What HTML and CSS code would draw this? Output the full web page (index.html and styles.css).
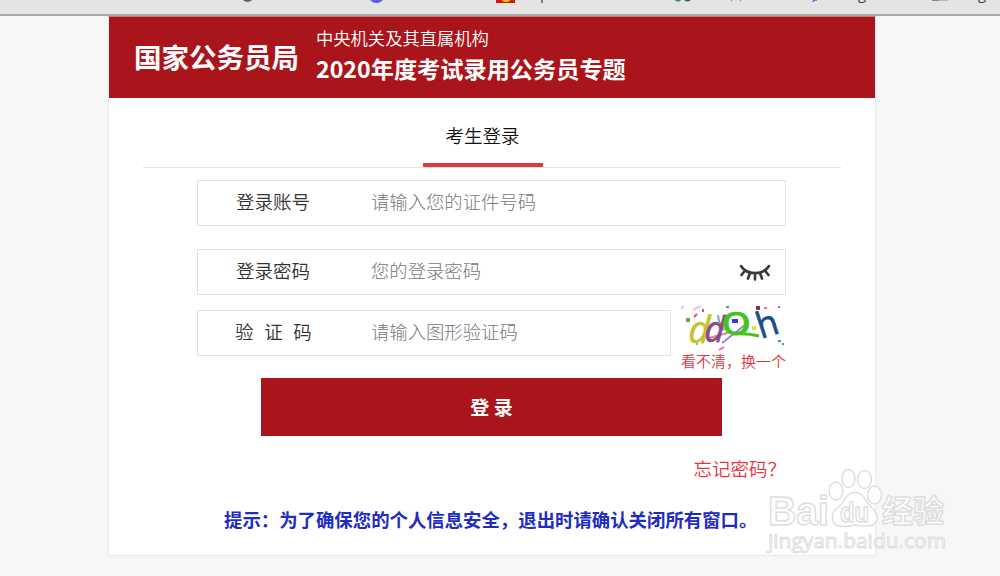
FILE: index.html
```html
<!DOCTYPE html>
<html lang="zh-CN">
<head>
    <meta charset="UTF-8">
    <title>考生登录</title>
    <link rel="stylesheet" href="styles.css">
</head>
<body>
    <div class="browser-bar">
        <svg width="1000" height="14" viewBox="0 0 1000 14">
            <circle cx="247.500" cy="-4" r="6" fill="#5f6368"/>
            <circle cx="376.500" cy="-5" r="8" fill="#5b5be6"/>
            <rect x="496" y="-13" width="19" height="16" fill="#d9150f"/>
            <circle cx="506" cy="-4" r="6" fill="#f8cf00"/>
            <circle cx="678" cy="-2" r="3.500" fill="#1a9c4b"/>
            <circle cx="687.500" cy="-2" r="3.500" fill="#0b7f35"/>
            <rect x="731" y="0" width="1" height="1" fill="#777"/>
            <rect x="740" y="0" width="1" height="1" fill="#777"/>
            <path d="M813 2 L814 0 L817 0" stroke="#5566cc" fill="none" stroke-width="1.500"/>
            <rect x="932" y="-3" width="7" height="4" fill="#888"/>
            <rect x="939" y="-3" width="9" height="4" fill="#c0b0d0"/>
            <text x="540" y="-1">p</text>
            <text x="858" y="-1">g</text>
            <text x="978" y="-1">g</text>
        </svg>
    </div>

    <div class="container">
        <div class="header">
            <h1>国家公务员局</h1>
            <div class="header-title">
                <p>中央机关及其直属机构</p>
                <h2>2020年度考试录用公务员专题</h2>
            </div>
        </div>

        <div class="tabs">
            <div class="tab">考生登录</div>
        </div>

        <form class="login-form">
            <div class="field">
                <label for="account">登录账号</label>
                <input type="text" id="account" placeholder="请输入您的证件号码">
            </div>
            <div class="field password">
                <label for="password">登录密码</label>
                <input type="password" id="password" placeholder="您的登录密码">
                <svg class="eye" width="32" height="20" viewBox="0 0 32 20">
                    <path d="M2 3 C8 12.500 24 12.500 30 3 M6 7.500 L2.500 12 M11 10 L9 15.500 M16 10.500 V16.500 M21 10 L23 15.500 M26 7.500 L29.500 12"/>
                </svg>
            </div>
            <div class="code-row">
                <div class="field">
                    <label for="code" class="code-label">验 证 码</label>
                    <input type="text" id="code" placeholder="请输入图形验证码">
                </div>
                <div class="captcha">
                    <svg width="104" height="46" viewBox="0 0 104 46">
                        <g class="noise">
                            <path d="M0 4 L3 1 M12 5 L20 1" stroke="#d5c9f5"/>
                            <path class="thick" d="M5 15 H9" stroke="#58b04a"/>
                            <path d="M41 38 L64 20" stroke="#8a86f0"/>
                            <path d="M28 33 L50 27" stroke="#d88a8a"/>
                            <path class="thick" d="M51 16 H57" stroke="#3838d8"/>
                            <path class="thick" d="M71 23 H75" stroke="#d6e24a"/>
                            <path d="M37 10 Q38 20 43 25" stroke="#7aa8c8"/>
                            <path d="M16 9 L13 12 M22 4 V7 M23 24 H26" stroke="#e04a80"/>
                            <path class="thick" d="M75 3 H79" stroke="#98342a"/>
                            <path d="M45 2 H48 M97 36 H100" stroke="#38b068"/>
                            <path d="M83 3 H86 M92 19 H95 M38 45 L43 42" stroke="#ec66b0"/>
                            <path d="M97 2 H99 M102 38 V40" stroke="#7878e0"/>
                            <path d="M15 39 H17 M27 34 H30" stroke="#66c8c0"/>
                        </g>
                        <text transform="translate(7 37) rotate(4) scale(0.950 1)" fill="#c4c42a" stroke="#c4c42a" font-size="38">d</text>
                        <text transform="translate(23 36) rotate(4) scale(0.950 1)" fill="#8a4a8c" stroke="#8a4a8c" font-size="36">d</text>
                        <text class="upright" transform="translate(40 29.500) scale(1.200 1)" fill="#45c41e" stroke="#45c41e" font-size="42">o</text>
                        <path class="swash" d="M52 29 Q66 28 78 31"/>
                        <text class="upright" transform="translate(80 34) rotate(-18) scale(0.950 1)" fill="#154e8a" stroke="#154e8a" font-size="36">h</text>
                    </svg>
                    <a class="change">看不清，换一个</a>
                </div>
            </div>
            <button type="button">登 录</button>
            <a class="forget">忘记密码？</a>
        </form>

        <p class="tips">提示：为了确保您的个人信息安全，退出时请确认关闭所有窗口。</p>
    </div>

    <svg class="watermark" width="184" height="90" viewBox="0 0 184 90">
        <text x="2" y="59" class="brand" font-size="41" textLength="61" lengthAdjust="spacingAndGlyphs">Bai</text>
        <ellipse cx="70" cy="25" rx="7" ry="9"/>
        <ellipse cx="82.500" cy="12.500" rx="6.500" ry="9"/>
        <ellipse cx="98.500" cy="13.500" rx="7" ry="9"/>
        <ellipse cx="108.500" cy="29" rx="7" ry="9"/>
        <path d="M80 31 Q88 22 97 30 Q101 37 108 44 Q115 53 107 59 Q101 61 89 59 Q76 62 70 59 Q63 52 69 44 Q77 38 80 31 Z"/>
        <text x="74" y="56" class="brand" font-size="27" textLength="29" lengthAdjust="spacingAndGlyphs">du</text>
        <text x="116" y="56" class="brand cn" font-size="31">经验</text>
        <text x="2" y="82" class="site" font-size="20" textLength="178" lengthAdjust="spacingAndGlyphs">jingyan.baidu.com</text>
    </svg>
</body>
</html>
```

FILE: styles.css
```css
* {
    box-sizing: border-box;
}
body {
    font-family: "Noto Sans CJK SC", sans-serif;
    background-color: #f7f7f7;
    margin: 0;
    height: 576px;
    overflow: hidden;
    color: #333;
}
h1, h2, p {
    margin: 0;
}
.browser-bar {
    height: 16px;
    background-color: #e4e4e4;
    border-bottom: 2px solid #a9a9a9;
    overflow: hidden;
}
.browser-bar svg {
    display: block;
}
.browser-bar text {
    font-family: "Open Sans", sans-serif;
    font-size: 15px;
    fill: #444;
}
.container {
    width: 768px;
    height: 540px;
    margin-left: 108px;
    background-color: #fff;
    border: 1px solid #ebebeb;
    border-top-color: #c9797c;
}
.header {
    display: flex;
    height: 81px;
    padding-left: 25px;
    background-color: #aa151b;
    color: #fff;
}
.header h1 {
    width: 182px;
    font-size: 27.500px;
    line-height: 79px;
    white-space: nowrap;
}
.header-title {
    padding-top: 6px;
}
.header-title p {
    font-size: 17.300px;
    font-weight: 350;
    line-height: 30px;
}
.header-title h2 {
    font-size: 23.200px;
    line-height: 30px;
}
.tabs {
    display: flex;
    justify-content: center;
    height: 70px;
    margin: 0 34px;
    padding-right: 19px;
    border-bottom: 1px solid #e2e2e2;
}
.tab {
    width: 120px;
    border-bottom: 4px solid #e2373b;
    color: #111;
    font-size: 18.500px;
    font-weight: 350;
    line-height: 75px;
    text-align: center;
}
.login-form {
    display: flex;
    flex-direction: column;
    width: 589px;
    margin: 12px 0 0 88px;
}
.field {
    display: flex;
    align-items: center;
    height: 46px;
    padding: 0 0 4px 38px;
    border: 1px solid #e2e2e2;
}
.field label {
    width: 135px;
    font-size: 18.500px;
    font-weight: 350;
    line-height: 40px;
    white-space: pre;
}
.field .code-label {
    word-spacing: 6.500px;
    margin-left: -1px;
    width: 136px;
}
.field input {
    flex: 1;
    min-width: 0;
    padding: 0;
    border: none;
    outline: none;
    font-family: "Noto Sans CJK SC", sans-serif;
    font-size: 18.350px;
    font-weight: 300;
}
.field input::placeholder {
    color: #777;
}
.password {
    margin: 23px 0 10px;
}
.eye {
    margin: 6px 14px 0 0;
    fill: none;
    stroke: #383838;
    stroke-width: 2.600;
    stroke-linecap: round;
}
.code-row {
    display: flex;
    height: 73px;
}
.code-row .field {
    width: 474px;
    margin-top: 5px;
}
.captcha {
    margin-left: 10px;
}
.captcha svg {
    display: block;
}
.captcha text {
    font-family: "Open Sans", sans-serif;
    font-style: italic;
    stroke-width: 0.700;
}
.captcha .upright {
    font-style: normal;
}
.noise path {
    fill: none;
    stroke-width: 2;
}
.noise .thick {
    stroke-width: 4;
}
.swash {
    fill: none;
    stroke: #45c41e;
    stroke-width: 3;
}
.change {
    display: block;
    color: #e5353b;
    font-size: 15px;
    font-weight: 350;
    line-height: 20px;
    white-space: nowrap;
}
button {
    width: 461px;
    height: 58px;
    margin-left: 64px;
    padding: 0 0 2px;
    border: none;
    background-color: #aa151b;
    color: #fff;
    font-family: "Noto Sans CJK SC", sans-serif;
    font-size: 19px;
    font-weight: bold;
}
.forget {
    align-self: flex-end;
    margin-top: 17px;
    color: #e5353b;
    font-size: 18.500px;
    font-weight: 350;
    line-height: 30px;
}
.tips {
    margin: 21px 0 0 115px;
    color: #222cc0;
    font-size: 18.400px;
    font-weight: bold;
    line-height: 30px;
    white-space: nowrap;
}
/* watermark lies over the page corner */
.watermark {
    position: absolute;
    left: 766px;
    top: 466px;
    fill: rgba(255, 255, 255, 0.8);
    stroke: #dedede;
    stroke-width: 1.500;
}
.watermark .brand {
    font-family: "Liberation Sans", sans-serif;
    font-weight: bold;
}
.watermark .cn {
    font-family: "Noto Sans CJK SC", sans-serif;
}
.watermark .site {
    font-family: "Open Sans", sans-serif;
    stroke-width: 1;
}
```
